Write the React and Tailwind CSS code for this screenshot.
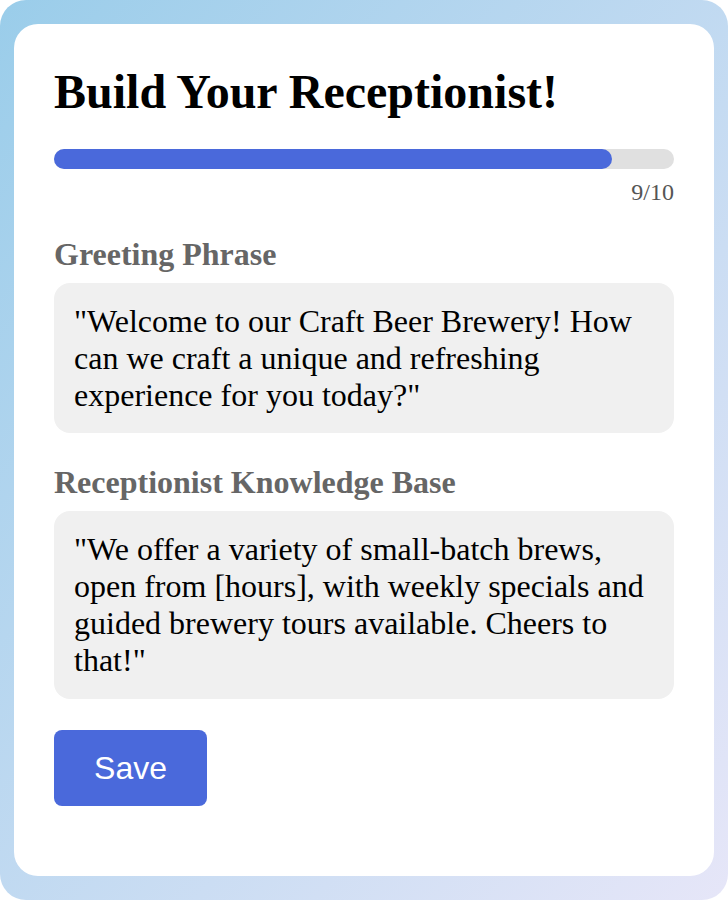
import React from 'react';

const App = () => {
  const step = 9;
  const total = 10;

  return (
    <div className="h-[900px] w-[728px] rounded-[26px] bg-gradient-to-br from-[#9acdea] to-[#e6e6f8] px-[14px] pt-6 pb-6 font-['Liberation_Serif',serif]">
      <div className="h-[852px] rounded-[24px] bg-white px-10 pt-11">
        <h1 className="text-[48px] font-bold leading-none text-black">Build Your Receptionist!</h1>

        {/* Progress */}
        <div className="mt-[33px] h-5 w-full rounded-full bg-[#e0e0e0]">
          <div className="h-5 rounded-full bg-[#4a69db]" style={{ width: `${(step / total) * 100}%` }} />
        </div>
        <p className="mt-[11px] text-right text-[24px] leading-none text-[#555]">{step}/{total}</p>

        {/* Greeting */}
        <h2 className="mt-[34px] text-[32px] font-bold leading-none text-[#666]">Greeting Phrase</h2>
        <div className="mt-[13px] rounded-2xl bg-[#f0f0f0] px-5 py-5 text-[32px] leading-[1.15] text-black">
          "Welcome to our Craft Beer Brewery! How can we craft a unique and refreshing experience for you today?"
        </div>

        {/* Knowledge base */}
        <h2 className="mt-[33px] text-[32px] font-bold leading-none text-[#666]">Receptionist Knowledge Base</h2>
        <div className="mt-[13px] rounded-2xl bg-[#f0f0f0] px-5 py-5 text-[32px] leading-[1.15] text-black">
          "We offer a variety of small-batch brews, open from [hours], with weekly specials and guided brewery tours available. Cheers to that!"
        </div>

        <button className="mt-[31px] h-[76px] w-[153px] rounded-lg bg-[#4a69db] font-['Liberation_Sans',sans-serif] text-[32px] text-white">
          Save
        </button>
      </div>
    </div>
  );
};

export default App;
